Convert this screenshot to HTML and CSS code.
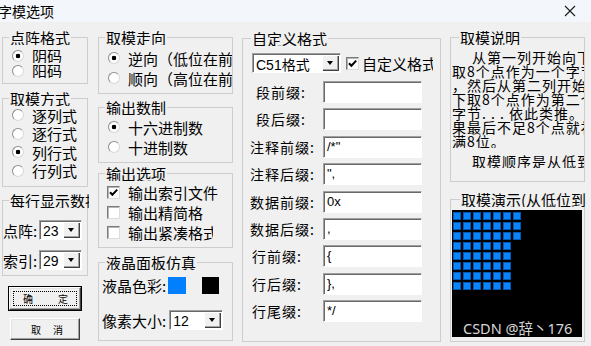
FILE: index.html
```html
<!DOCTYPE html>
<html lang="zh-CN">
    <head>
        <meta charset="UTF-8">
        <title>字模选项</title>
        <link rel="stylesheet" href="styles.css">
    </head>
    <body>
        <!-- Window title bar -->
        <div class="titlebar">
            <span class="title">字模选项</span>
            <svg class="close" width="12" height="12" viewBox="0 0 12 12"><path d="M1 1L11 11M11 1L1 11" stroke="#1a1a1a" stroke-width="1.1"/></svg>
        </div>

        <div class="dialog">
            <!-- Left column -->
            <div class="col col-a">
                <div class="group g-dot">
                    <span class="caption">点阵格式</span>
                    <div class="opt"><i class="radio on"></i>阴码</div>
                    <div class="opt"><i class="radio"></i>阳码</div>
                </div>
                <div class="group g-mode">
                    <span class="caption">取模方式</span>
                    <div class="opt"><i class="radio"></i>逐列式</div>
                    <div class="opt"><i class="radio"></i>逐行式</div>
                    <div class="opt"><i class="radio on"></i>列行式</div>
                    <div class="opt"><i class="radio"></i>行列式</div>
                </div>
                <div class="group g-per">
                    <span class="caption">每行显示数据</span>
                    <div class="pick"><span>点阵:</span><div class="combo c-small"><span class="combo-val">23</span><span class="combo-btn"></span></div></div>
                    <div class="pick"><span>索引:</span><div class="combo c-small"><span class="combo-val">29</span><span class="combo-btn"></span></div></div>
                </div>
                <div class="btn btn-ok"><span class="btn-face"><span>确</span><span>定</span></span></div>
                <div class="btn btn-cancel"><span class="btn-face"><span>取</span><span>消</span></span></div>
            </div>

            <!-- Middle column -->
            <div class="col col-b">
                <div class="group g-dir">
                    <span class="caption">取模走向</span>
                    <div class="opt"><i class="radio on"></i>逆向（低位在前）</div>
                    <div class="opt"><i class="radio"></i>顺向（高位在前）</div>
                </div>
                <div class="group g-radix">
                    <span class="caption">输出数制</span>
                    <div class="opt"><i class="radio on"></i>十六进制数</div>
                    <div class="opt"><i class="radio"></i>十进制数</div>
                </div>
                <div class="group g-out">
                    <span class="caption">输出选项</span>
                    <div class="opt"><i class="check on"></i>输出索引文件</div>
                    <div class="opt"><i class="check"></i>输出精简格</div>
                    <div class="opt"><i class="check"></i>输出紧凑格式</div>
                </div>
                <div class="group g-lcd">
                    <span class="caption">液晶面板仿真</span>
                    <div class="lcd-row">
                        <span>液晶色彩:</span>
                        <span class="swatch sw-blue"></span>
                        <span class="swatch sw-black"></span>
                    </div>
                    <div class="lcd-row row-size">
                        <span>像素大小:</span>
                        <div class="combo c-size"><span class="combo-val">12</span><span class="combo-btn"></span></div>
                    </div>
                </div>
            </div>

            <!-- Custom format column -->
            <div class="col col-c">
                <div class="group g-custom">
                    <span class="caption">自定义格式</span>
                    <div class="fmt-row">
                        <div class="combo c-fmt"><span class="combo-val">C51格式</span><span class="combo-btn"></span></div>
                        <i class="check on"></i>
                        <span class="fmt-lbl">自定义格式</span>
                    </div>
                    <div class="field"><span class="lbl ind">段前缀:</span><span class="box"></span></div>
                    <div class="field"><span class="lbl ind">段后缀:</span><span class="box"></span></div>
                    <div class="field"><span class="lbl">注释前缀:</span><span class="box">/*"</span></div>
                    <div class="field"><span class="lbl">注释后缀:</span><span class="box">",</span></div>
                    <div class="field"><span class="lbl">数据前缀:</span><span class="box">0x</span></div>
                    <div class="field"><span class="lbl">数据后缀:</span><span class="box">,</span></div>
                    <div class="field"><span class="lbl sm">行前缀:</span><span class="box">{</span></div>
                    <div class="field"><span class="lbl sm">行后缀:</span><span class="box">},</span></div>
                    <div class="field"><span class="lbl sm">行尾缀:</span><span class="box">*/</span></div>
                </div>
            </div>

            <!-- Help and preview column -->
            <div class="col col-d">
                <div class="group g-help">
                    <span class="caption">取模说明</span>
                    <p class="help">
                        <span class="first">从第一列开始向下</span><br>
                        取8个点作为一个字节<br>
                        ，然后从第二列开始向<br>
                        下取8个点作为第二个<br>
                        字节. . . 依此类推。如<br>
                        果最后不足8个点就补<br>
                        满8位。
                    </p>
                    <p class="help help-2"><span class="first">取模顺序是从低到高</span></p>
                </div>
                <div class="group g-demo">
                    <span class="caption">取模演示(从低位到高位)</span>
                    <div class="lcd" id="lcd">
                        <span class="mark">CSDN @辞丶176</span>
                    </div>
                </div>
            </div>
        </div>

        <script type="text/javascript">
            // Fill the preview screen: 8 rows, the first 3 are 7 dots wide, the rest 6
            const lcd = document.getElementById('lcd');
            for (var r = 0; r < 8; r++) {
                const row = document.createElement('div');
                row.className = 'dot-row';
                const count = r < 3 ? 7 : 6;
                for (var c = 0; c < count; c++) {
                    const dot = document.createElement('span');
                    dot.className = 'dot';
                    row.appendChild(dot);
                }
                lcd.insertBefore(row, lcd.lastElementChild);
            }
        </script>
    </body>
</html>
```
FILE: styles.css
```css
* {
    margin: 0;
    padding: 0;
    box-sizing: border-box;
}

body {
    width: 591px;
    height: 346px;
    overflow: hidden;
    font: 15px "Noto Sans CJK SC", sans-serif;
    color: #000;
    background-color: #f0f0f0;
}

/* title bar */
.titlebar {
    display: flex;
    justify-content: space-between;
    align-items: center;
    height: 22px;
    padding-right: 15px;
    background-color: #f3f7fb;
}

.title {
    margin-left: -2px;
    font-size: 14px;
    line-height: 22px;
}

/* columns */
.dialog {
    display: flex;
    padding: 15px 0 0 2px;
}

.col-a {width: 86px;}
.col-b {width: 135px; margin-left: 10px;}
.col-c {width: 199px; margin-left: 9px; padding-top: 1px;}
.col-d {width: 135px; margin-left: 9px;}

/* group boxes */
.group {
    border: 1px solid #cdcdcd;
}

.caption {
    display: block;
    width: max-content;
    max-width: calc(100% - 6px);
    overflow: hidden;
    white-space: nowrap;
    margin: -8px 0 0 6px;
    padding: 0 1px;
    line-height: 15px;
    background-color: #f0f0f0;
}

.col-c .caption, .col-d .caption {margin-left: 8px;}
.g-per .caption {max-width: 80px;}
.g-demo .caption {max-width: none; width: 126px;}

.opt {
    display: flex;
    align-items: center;
    overflow: hidden;
    white-space: nowrap;
    padding-left: 9px;
}

.radio {
    flex: none;
    width: 12px;
    height: 12px;
    margin-right: 8px;
    border-radius: 50%;
    border: 1px solid;
    border-color: #8c8c8c #d8d8d8 #d8d8d8 #8c8c8c;
    background-color: #fff;
}

.radio.on {
    background: radial-gradient(circle, #000 2px, #fff 2.6px);
}

.check {
    flex: none;
    width: 13px;
    height: 13px;
    margin-right: 8px;
    border: 1px solid;
    border-color: #7a7a7a #dcdcdc #dcdcdc #7a7a7a;
    box-shadow: inset 1px 1px 0 #b5b5b5;
    background-color: #fff;
}

.check.on {
    background: #fff url("data:image/svg+xml,%3Csvg xmlns='http://www.w3.org/2000/svg' width='11' height='11'%3E%3Cpath d='M2 5.2L4.4 7.8L9.2 2.6' fill='none' stroke='%23000' stroke-width='2'/%3E%3C/svg%3E") no-repeat center;
}

/* left column */
.g-dot .caption {margin-bottom: 3px;}
.g-dot .opt {height: 15px;}
.g-dot {padding-bottom: 5px;}

.g-mode {margin-top: 14px; padding-bottom: 6px;}
.g-mode .opt {height: 18.5px;}

.g-per {margin-top: 13px; padding-bottom: 5px;}
.g-per .caption {margin-bottom: 12px;}

.pick {
    display: flex;
    align-items: center;
    height: 20px;
    white-space: nowrap;
}

.pick + .pick {margin-top: 10px;}
.pick > span {width: 36px;}

/* combo box */
.combo {
    display: flex;
    align-items: center;
    height: 20px;
    border: 1px solid;
    border-color: #a0a0a0 #fff #fff #a0a0a0;
    box-shadow: inset 1px 1px 0 #696969;
    background-color: #fff;
}

.combo-val {
    flex: 1;
    padding: 1px 0 0 3px;
    font: 14px "Liberation Sans", "Noto Sans CJK SC", sans-serif;
    white-space: nowrap;
    overflow: hidden;
}

.combo-btn {
    position: relative;
    flex: none;
    width: 17px;
    height: 16px;
    margin-right: 1px;
    background-color: #f0f0f0;
    box-shadow: inset 1px 1px 0 #fff, inset -1px -1px 0 #404040, inset -2px -2px 0 #a0a0a0;
}

.combo-btn::after {
    content: "";
    position: absolute;
    left: 5px;
    top: 6px;
    border-style: solid;
    border-width: 4px 3.5px 0 3.5px;
    border-color: #000 transparent transparent transparent;
}

.c-small {width: 43px;}
.c-size {width: 54px; margin-left: 3px;}
.c-fmt {width: 89px;}

/* buttons */
.btn {
    display: flex;
    background-color: #f0f0f0;
    border: 1px solid;
    border-color: #fff #404040 #404040 #fff;
    box-shadow: inset -1px -1px 0 #a0a0a0, inset 1px 1px 0 #e3e3e3;
}

.btn-face {
    display: flex;
    flex: 1;
    justify-content: space-between;
    align-items: center;
    padding: 0 12px;
    font-size: 10px;
}

.btn-ok {
    width: 72px;
    height: 23px;
    margin: 11px 0 0 7px;
    outline: 1px solid #000;
    padding: 3px;
}

.btn-ok .btn-face {
    border: 1px dotted #000;
    padding: 0 8px 0 9px;
}

.btn-cancel {
    width: 70px;
    height: 22px;
    margin: 8px 0 0 8px;
}

.btn-cancel .btn-face {padding: 0 16px 0 20px;}

/* middle column */
.g-dir .caption {margin-bottom: 3px;}
.g-dir {padding-bottom: 5px;}
.g-dir .opt, .g-radix .opt, .g-out .opt {height: 20px;}

.g-radix {margin-top: 13px; padding-bottom: 5px;}
.g-radix .caption {margin-bottom: 2px;}

.g-out {margin-top: 10px; padding-bottom: 5px;}
.g-out .caption {margin-bottom: 1px;}
.g-out .opt {padding-left: 8px;}
.g-out .opt:last-child {width: 114px;}

.g-lcd {margin-top: 14px; padding-bottom: 10px;}
.g-lcd .caption {margin-bottom: 6px;}

.lcd-row {
    display: flex;
    align-items: center;
    height: 18px;
    padding-left: 3px;
    white-space: nowrap;
}

.row-size {height: 20px; margin-top: 16px;}

.swatch {
    width: 18px;
    height: 17px;
}

.sw-blue {margin-left: 2px; background-color: #0080ff;}
.sw-black {margin-left: 16px; width: 17px; background-color: #000;}

/* custom format column */
.g-custom {padding-bottom: 19px;}
.g-custom .caption {margin-bottom: 7px;}

.fmt-row {
    display: flex;
    align-items: center;
    height: 20px;
    padding-left: 9px;
    overflow: hidden;
    white-space: nowrap;
}

.fmt-row .check {margin: 0 3px 0 5px;}

.fmt-lbl {
    width: 71px;
    overflow: hidden;
}

.field {
    display: flex;
    align-items: center;
    height: 22px;
    margin-top: 5.4px;
    padding-left: 7px;
}

.fmt-row + .field {margin-top: 8px;}

.lbl {
    width: 73px;
    font-size: 14px;
    letter-spacing: 1px;
    white-space: nowrap;
}

.lbl.ind {padding-left: 6px;}
.lbl.sm {padding-left: 2px;}

.box {
    width: 99px;
    height: 22px;
    padding: 2px 0 0 3px;
    font: 13px "Liberation Sans", sans-serif;
    border: 1px solid;
    border-color: #a0a0a0 #fff #fff #a0a0a0;
    box-shadow: inset 1px 1px 0 #696969;
    background-color: #fff;
}

/* help column */
.g-help {padding-bottom: 13px;}
.g-help .caption {margin-bottom: 5px;}

.help {
    overflow: hidden;
    white-space: nowrap;
    padding-left: 1px;
    font-size: 14px;
    letter-spacing: 1px;
    line-height: 14px;
}

.help .first {padding-left: 20px;}
.help-2 {margin-top: 6px;}

.g-demo {margin-top: 17px; padding: 0 0 4px 1px;}
.g-demo .caption {margin-bottom: 3px;}

.lcd {
    position: relative;
    width: 130px;
    height: 127px;
    padding: 2px 0 0 1px;
    background-color: #000;
}

.dot-row {
    display: flex;
    gap: 2px;
    margin-bottom: 2px;
}

.dot {
    width: 8px;
    height: 8px;
    background-color: #0a84ff;
    box-shadow: inset 0 0 0 1px #0058b0;
}

.mark {
    position: absolute;
    left: 11px;
    bottom: 0;
    font: 14.5px "Noto Sans", "Noto Sans CJK SC", sans-serif;
    line-height: 18px;
    color: #d8d8d8;
    white-space: nowrap;
}
```
